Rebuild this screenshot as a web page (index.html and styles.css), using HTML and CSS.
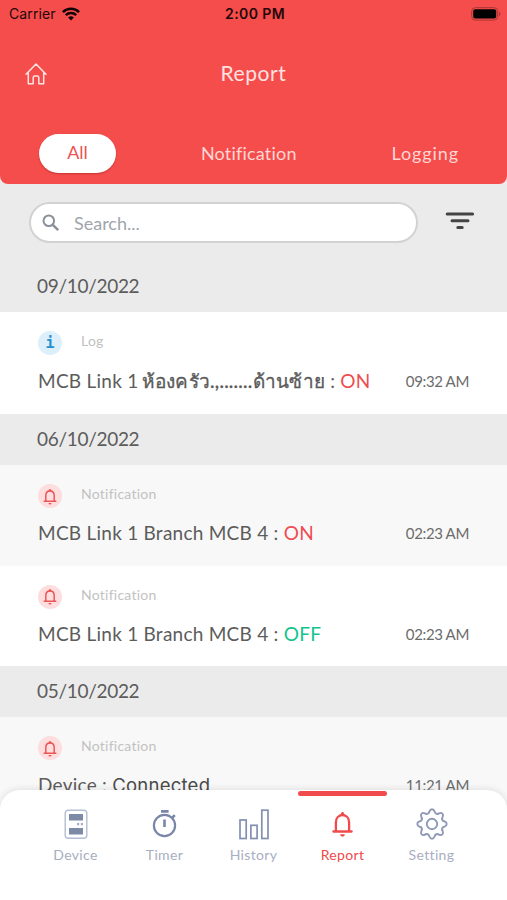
FILE: index.html
```html
<!DOCTYPE html>
<html lang="en">
<head>
    <meta charset="UTF-8">
    <meta name="viewport" content="width=device-width, initial-scale=1.0">
    <title>Report</title>
    <link rel="stylesheet" href="styles.css">
</head>
<body>
    <svg width="0" height="0" class="sprite">
        <symbol id="bell" viewBox="0 0 22 26">
            <path d="M4.400 20V11.500C4.400 7.200 7 4.200 11 4.200s6.600 3 6.600 7.300V20" fill="none" stroke="currentColor" stroke-width="2.300"/>
            <path d="M1.900 20.500h18.200" fill="none" stroke="currentColor" stroke-width="2.300" stroke-linecap="round"/>
            <path d="M8 4.600C9 3.800 9.300 3 9.600 2a1.500 1.500 0 0 1 2.800 0c.3 1 .6 1.800 1.600 2.600zM8.600 23.300h4.800a2.400 2.400 0 0 1-4.800 0z" fill="currentColor"/>
        </symbol>
        <symbol id="tooth" viewBox="-16 -16 32 32">
            <path d="M-2.900-11.600C-2.200-13.200-2.200-14.700 0-14.700S2.200-13.200 2.900-11.600C3.400-10.500 5-9.900 6.150-10.250" fill="none" stroke="currentColor" stroke-width="1.900" stroke-linecap="round"/>
        </symbol>
    </svg>

    <div class="app">
        <header class="header">
            <div class="status-bar">
                <div class="carrier">
                    <span>Carrier</span>
                    <svg width="18" height="14" viewBox="0 0 18 14" fill="none" stroke="#100404" stroke-width="2.500">
                        <path d="M.900 5.100a11.600 11.600 0 0 1 16.200 0"/>
                        <path d="M3.800 8.200a7.500 7.500 0 0 1 10.400 0"/>
                        <path d="M9 13.500L6.100 10.600a4.100 4.100 0 0 1 5.800 0z" fill="#100404" stroke="none"/>
                    </svg>
                </div>
                <span class="clock">2:00 PM</span>
                <svg class="battery" width="30" height="14" viewBox="0 0 30 14">
                    <rect x=".7" y=".7" width="26" height="12.400" rx="3.500" fill="none" stroke="#a83636" stroke-width="1"/>
                    <rect x="2.200" y="2.200" width="23" height="9.400" rx="2" fill="#000"/>
                    <path d="M28 4.800a2.400 2.400 0 0 1 0 4.400z" fill="#a83636"/>
                </svg>
            </div>

            <div class="title-bar">
                <svg class="home" width="22" height="22" viewBox="0 0 22 22" fill="none" stroke="#ffe4e2" stroke-width="1.500" stroke-linejoin="round" stroke-linecap="round">
                    <path d="M3.300 9.800L1 11.200 11 1l10 10.200-2.300-1.400v11h-4.900v-6.300c0-1-.5-1.500-1.500-1.500H9.700c-1 0-1.500.5-1.500 1.500v6.300H3.300z"/>
                </svg>
                <h1>Report</h1>
            </div>

            <div class="tabs">
                <div class="tab active">All</div>
                <div class="tab notification">Notification</div>
                <div class="tab logging">Logging</div>
            </div>
        </header>

        <div class="search-bar">
            <div class="search-box">
                <svg width="18" height="18" viewBox="0 0 18 18" fill="none" stroke="#8a8f98" stroke-width="2">
                    <circle cx="6.800" cy="6.800" r="5.300"/>
                    <path d="M10.800 10.800l5.400 5.400" stroke-width="2.400"/>
                </svg>
                <span>Search...</span>
            </div>
            <svg class="filter" width="30" height="18" viewBox="0 0 30 18" stroke="#444" stroke-width="3" stroke-linecap="round">
                <path d="M2.200 2h25.400M7 8.700h16M12.800 15.400h4.400"/>
            </svg>
        </div>

        <div class="date first">09/10/2022</div>
        <div class="row tall">
            <div class="row-head">
                <div class="badge info">i</div>
                <span class="kind">Log</span>
            </div>
            <div class="row-body">
                <div class="message">MCB Link 1 <span class="thai">ห้องครัว.,.......ด้านซ้าย</span> : <span class="on">ON</span></div>
                <div class="time">09:32 AM</div>
            </div>
        </div>

        <div class="date">06/10/2022</div>
        <div class="row gray">
            <div class="row-head">
                <div class="badge alert"><svg width="14" height="17"><use href="#bell"/></svg></div>
                <span class="kind">Notification</span>
            </div>
            <div class="row-body">
                <div class="message">MCB Link 1 Branch MCB 4 : <span class="on">ON</span></div>
                <div class="time">02:23 AM</div>
            </div>
        </div>
        <div class="row">
            <div class="row-head">
                <div class="badge alert"><svg width="14" height="17"><use href="#bell"/></svg></div>
                <span class="kind">Notification</span>
            </div>
            <div class="row-body">
                <div class="message">MCB Link 1 Branch MCB 4 : <span class="off">OFF</span></div>
                <div class="time">02:23 AM</div>
            </div>
        </div>

        <div class="date">05/10/2022</div>
        <div class="row gray">
            <div class="row-head">
                <div class="badge alert"><svg width="14" height="17"><use href="#bell"/></svg></div>
                <span class="kind">Notification</span>
            </div>
            <div class="row-body">
                <div class="message">Device : <span class="connected">Connected</span></div>
                <div class="time">11:21 AM</div>
            </div>
        </div>

        <nav class="bottom-nav">
            <div class="nav-item">
                <svg width="32" height="32" viewBox="0 0 32 32">
                    <rect x="5.200" y="1.200" width="21.600" height="28" rx="3" fill="none" stroke="#b4bdd3" stroke-width="1.400"/>
                    <path d="M9 5h14v6.500H9zM9 19h14v6.500H9z" fill="#7c8aa8"/>
                    <path d="M17 14h2.200v2.200H17zM20.800 14H23v2.200h-2.200z" fill="#a5aec6"/>
                </svg>
                <span>Device</span>
            </div>
            <div class="nav-item">
                <svg width="32" height="32" viewBox="0 0 32 32" fill="none" stroke="#7986a8" stroke-width="2.200">
                    <circle cx="15.500" cy="16.500" r="10.600"/>
                    <path d="M12 2.400h7.600M15.500 10.500v7.500M22.800 9.200l3-3" stroke-width="2.600"/>
                </svg>
                <span>Timer</span>
            </div>
            <div class="nav-item">
                <svg width="32" height="32" viewBox="0 0 32 32" fill="none" stroke="#8490b0" stroke-width="1.700">
                    <rect x="2" y="11" width="6.200" height="18.500"/>
                    <rect x="12.900" y="16.300" width="6.200" height="13.200"/>
                    <rect x="23.800" y="1.200" width="6.200" height="28.300"/>
                </svg>
                <span>History</span>
            </div>
            <div class="nav-item active">
                <svg width="32" height="32" viewBox="0 0 32 32"><use href="#bell" x="4.500" y="2" width="22" height="26"/></svg>
                <span>Report</span>
            </div>
            <div class="nav-item">
                <svg class="gear" width="32" height="32" viewBox="-16 -16 32 32">
                    <use href="#tooth" x="-16" y="-16" width="32" height="32"/>
                    <use href="#tooth" x="-16" y="-16" width="32" height="32" transform="rotate(45)"/>
                    <use href="#tooth" x="-16" y="-16" width="32" height="32" transform="rotate(90)"/>
                    <use href="#tooth" x="-16" y="-16" width="32" height="32" transform="rotate(135)"/>
                    <use href="#tooth" x="-16" y="-16" width="32" height="32" transform="rotate(180)"/>
                    <use href="#tooth" x="-16" y="-16" width="32" height="32" transform="rotate(225)"/>
                    <use href="#tooth" x="-16" y="-16" width="32" height="32" transform="rotate(270)"/>
                    <use href="#tooth" x="-16" y="-16" width="32" height="32" transform="rotate(315)"/>
                    <circle r="5.200" fill="none" stroke="currentColor" stroke-width="1.900"/>
                </svg>
                <span>Setting</span>
            </div>
        </nav>
    </div>
</body>
</html>
```
FILE: styles.css
```css
* {
    box-sizing: border-box;
}

body {
    margin: 0;
    font-family: 'Lato', 'Noto Sans', sans-serif;
    color: #5c5c5c;
    background-color: #ebebeb;
}

.sprite {
    position: absolute;
}

.app {
    position: relative;
    width: 507px;
    height: 900px;
    overflow: hidden;
    background-color: #ebebeb;
}

/* header */
.header {
    height: 184px;
    background-color: #f54d4c;
    border-radius: 0 0 8px 8px;
    color: #fff;
}

.status-bar {
    display: grid;
    grid-template-columns: 1fr auto 1fr;
    align-items: center;
    height: 27px;
    padding: 0 6px 0 9px;
    font-family: 'Inter', sans-serif;
    font-size: 14px;
    color: #230808;
}

.carrier {
    display: flex;
    align-items: center;
    gap: 6px;
    letter-spacing: 0.1px;
}

.clock {
    font-weight: 600;
    letter-spacing: 0.4px;
}

.battery {
    justify-self: end;
}

.title-bar {
    display: grid;
    grid-template-columns: 1fr auto 1fr;
    align-items: center;
    height: 94px;
    padding: 0 25px;
}

.title-bar h1 {
    margin: -3px 0 0;
    font-size: 21px;
    font-weight: 400;
    letter-spacing: 0.6px;
    color: #ffe2e0;
}

.tabs {
    display: flex;
    align-items: center;
    height: 65px;
    padding: 0 48px 0 39px;
    justify-content: space-between;
    font-size: 18px;
    color: #ffd6d4;
}

.tab {
    padding-bottom: 2px;
}

.tab.active {
    width: 77px;
    height: 39px;
    padding: 0;
    line-height: 37px;
    border-radius: 20px;
    background-color: #fff;
    color: #ea5354;
    text-align: center;
    box-shadow: 0 1px 2px rgba(120, 20, 20, 0.4);
}

.tab.notification {
    margin-left: -10px;
    letter-spacing: 0.2px;
}

.tab.logging {
    letter-spacing: 0.9px;
}

/* search */
.search-bar {
    display: flex;
    align-items: center;
    gap: 27px;
    height: 77px;
    padding: 0 29px;
}

.search-box {
    display: flex;
    align-items: center;
    gap: 14px;
    width: 389px;
    height: 41px;
    padding: 0 12px;
    border: 2px solid #d2d2d2;
    border-radius: 21px;
    background-color: #fff;
    font-size: 18px;
    color: #a0a5ad;
}

.search-box svg {
    margin-left: -1px;
}

.filter {
    margin-top: -4px;
}

/* list */
.date {
    height: 51px;
    padding-left: 37px;
    line-height: 50px;
    font-size: 19px;
    letter-spacing: -0.3px;
    background-color: #ebebeb;
}

.row {
    height: 100.5px;
    padding: 19px 38px 0;
    background-color: #fff;
}

.row.tall {
    height: 102px;
}

.row.gray {
    background-color: #f8f8f8;
}

.row-head {
    display: flex;
    gap: 19px;
    height: 24px;
}

.badge {
    display: flex;
    align-items: center;
    justify-content: center;
    width: 24px;
    height: 24px;
    border-radius: 50%;
}

.badge.info {
    background-color: #dceffa;
    color: #258fd0;
    font-family: 'DejaVu Sans Mono', monospace;
    font-size: 15px;
    font-weight: bold;
}

.badge.alert {
    background-color: #fddddd;
    color: #ea5555;
}

.kind {
    font-size: 14px;
    line-height: 20px;
    letter-spacing: 0.25px;
    color: #c2c2c2;
}

.row-body {
    display: flex;
    align-items: center;
    justify-content: space-between;
    height: 50px;
}

.row.tall .row-body {
    height: 52px;
}

.message {
    font-size: 19px;
    line-height: 30px;
    letter-spacing: 0.25px;
    white-space: nowrap;
}

.thai {
    font-weight: 500;
    letter-spacing: 0.25px;
    margin-left: -2px;
    -webkit-text-stroke: 0.3px #555;
}

.connected {
    font-family: 'Inter', sans-serif;
    font-size: 18.5px;
    color: #4a4a4a;
}

.on {
    color: #f04c50;
}

.off {
    color: #12c48b;
}

.time {
    font-size: 15px;
    letter-spacing: -0.35px;
    color: #6c6c6c;
}

/* bottom navigation */
.bottom-nav {
    position: absolute;
    left: 0;
    right: 0;
    bottom: 0;
    display: flex;
    justify-content: center;
    height: 110px;
    border-radius: 20px 20px 0 0;
    background-color: #fff;
    box-shadow: 0 -1px 7px rgba(0, 0, 0, 0.1);
}

.nav-item {
    display: flex;
    flex-direction: column;
    align-items: center;
    width: 89px;
    padding-top: 19px;
    font-size: 14px;
    letter-spacing: 0.35px;
    color: #a8aec1;
}

.nav-item span {
    margin-top: 5px;
}

.gear {
    margin-top: -1px;
    margin-bottom: 1px;
    color: #8f99b8;
}

.nav-item.active {
    position: relative;
    color: #ef4a4c;
}

.nav-item.active::before {
    content: '';
    position: absolute;
    top: 1px;
    left: 0;
    width: 89px;
    height: 5px;
    border-radius: 3px;
    background-color: #f04c4e;
}
```
